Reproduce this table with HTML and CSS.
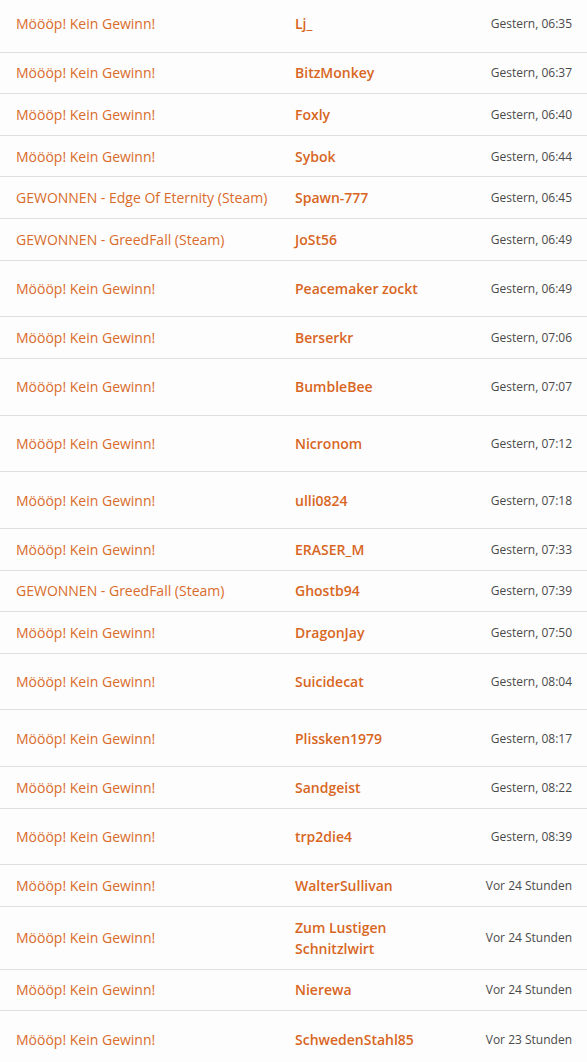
FILE: index.html
```html
<!DOCTYPE html>
<html lang="de">
<head>
<meta charset="utf-8">
<title>Gewinnspiel</title>
<link rel="stylesheet" href="styles.css">
</head>
<body>
<div class="viewport">
<div class="results">
<div class="row tall first"><div class="result">Möööp! Kein Gewinn!</div><div class="user">Lj_</div><div class="date">Gestern, 06:35</div></div>
<div class="row"><div class="result">Möööp! Kein Gewinn!</div><div class="user">BitzMonkey</div><div class="date">Gestern, 06:37</div></div>
<div class="row"><div class="result">Möööp! Kein Gewinn!</div><div class="user">Foxly</div><div class="date">Gestern, 06:40</div></div>
<div class="row"><div class="result">Möööp! Kein Gewinn!</div><div class="user">Sybok</div><div class="date">Gestern, 06:44</div></div>
<div class="row"><div class="result">GEWONNEN - Edge Of Eternity (Steam)</div><div class="user">Spawn-777</div><div class="date">Gestern, 06:45</div></div>
<div class="row"><div class="result">GEWONNEN - GreedFall (Steam)</div><div class="user">JoSt56</div><div class="date">Gestern, 06:49</div></div>
<div class="row tall"><div class="result">Möööp! Kein Gewinn!</div><div class="user">Peacemaker zockt</div><div class="date">Gestern, 06:49</div></div>
<div class="row"><div class="result">Möööp! Kein Gewinn!</div><div class="user">Berserkr</div><div class="date">Gestern, 07:06</div></div>
<div class="row tall"><div class="result">Möööp! Kein Gewinn!</div><div class="user">BumbleBee</div><div class="date">Gestern, 07:07</div></div>
<div class="row tall"><div class="result">Möööp! Kein Gewinn!</div><div class="user">Nicronom</div><div class="date">Gestern, 07:12</div></div>
<div class="row tall"><div class="result">Möööp! Kein Gewinn!</div><div class="user">ulli0824</div><div class="date">Gestern, 07:18</div></div>
<div class="row"><div class="result">Möööp! Kein Gewinn!</div><div class="user">ERASER_M</div><div class="date">Gestern, 07:33</div></div>
<div class="row"><div class="result">GEWONNEN - GreedFall (Steam)</div><div class="user">Ghostb94</div><div class="date">Gestern, 07:39</div></div>
<div class="row"><div class="result">Möööp! Kein Gewinn!</div><div class="user">DragonJay</div><div class="date">Gestern, 07:50</div></div>
<div class="row tall"><div class="result">Möööp! Kein Gewinn!</div><div class="user">Suicidecat</div><div class="date">Gestern, 08:04</div></div>
<div class="row tall"><div class="result">Möööp! Kein Gewinn!</div><div class="user">Plissken1979</div><div class="date">Gestern, 08:17</div></div>
<div class="row"><div class="result">Möööp! Kein Gewinn!</div><div class="user">Sandgeist</div><div class="date">Gestern, 08:22</div></div>
<div class="row tall"><div class="result">Möööp! Kein Gewinn!</div><div class="user">trp2die4</div><div class="date">Gestern, 08:39</div></div>
<div class="row"><div class="result">Möööp! Kein Gewinn!</div><div class="user">WalterSullivan</div><div class="date">Vor 24 Stunden</div></div>
<div class="row"><div class="result">Möööp! Kein Gewinn!</div><div class="user">Zum Lustigen Schnitzlwirt</div><div class="date">Vor 24 Stunden</div></div>
<div class="row"><div class="result">Möööp! Kein Gewinn!</div><div class="user">Nierewa</div><div class="date">Vor 24 Stunden</div></div>
<div class="row tall"><div class="result">Möööp! Kein Gewinn!</div><div class="user">SchwedenStahl85</div><div class="date">Vor 23 Stunden</div></div>
</div>
</div>
</body>
</html>
```
FILE: styles.css
```css
html, body {
  margin: 0;
  padding: 0;
  background: #fdfdfd;
}
.viewport {
  height: 1062px;
  overflow: hidden;
}
.results {
  width: 587px;
  margin-top: -4px;
  font-family: "Open Sans", "Noto Sans", sans-serif;
  font-size: 14px;
  line-height: 21px;
}
.row {
  display: grid;
  grid-template-columns: 279px 184px 124px;
  align-items: center;
  box-sizing: border-box;
  min-height: 41.6px;
  padding: 9.8px 0;
  border-bottom: 1px solid #e0e0e0;
}
.row.tall {
  min-height: 56.7px;
}
.result {
  padding-left: 16px;
  padding-right: 8px;
  white-space: nowrap;
  color: #d96b2b;
}
.user {
  padding-left: 16px;
  padding-right: 12px;
  color: #d8661f;
  font-weight: 600;
}
.date {
  color: #4a4a4a;
  font-size: 12px;
  text-align: right;
  padding-right: 15px;
  white-space: nowrap;
}
```
